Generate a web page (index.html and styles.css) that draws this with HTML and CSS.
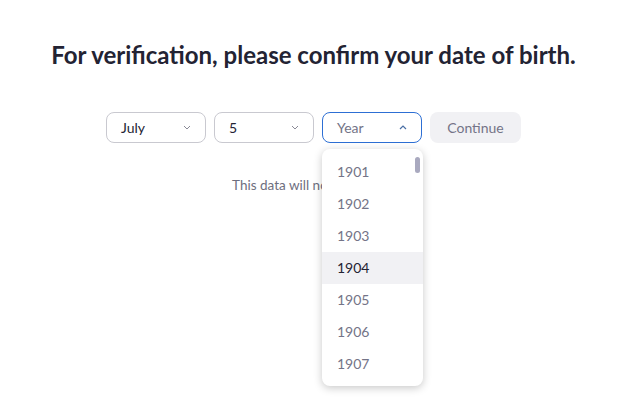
FILE: index.html
```html
<!DOCTYPE html>
<html>
<head>
<meta charset="utf-8">
<link rel="stylesheet" href="styles.css">
</head>
<body>
<div class="page">
  <h1 class="title">For verification, please confirm your date of birth.</h1>
  <div class="row">
    <div class="select">
      <span class="value">July</span>
      <svg class="chev" width="8" height="5" viewBox="0 0 8 5"><path d="M1 1 L4 4 L7 1" fill="none" stroke="#8a8a96" stroke-width="1"/></svg>
    </div>
    <div class="select">
      <span class="value">5</span>
      <svg class="chev" width="8" height="5" viewBox="0 0 8 5"><path d="M1 1 L4 4 L7 1" fill="none" stroke="#8a8a96" stroke-width="1"/></svg>
    </div>
    <div class="select open">
      <span class="value placeholder">Year</span>
      <svg class="chev" width="8" height="5" viewBox="0 0 8 5"><path d="M1 4 L4 1 L7 4" fill="none" stroke="#4a6fa5" stroke-width="1.2"/></svg>
      <div class="menu">
        <div class="item">1901</div>
        <div class="item">1902</div>
        <div class="item">1903</div>
        <div class="item hover">1904</div>
        <div class="item">1905</div>
        <div class="item">1906</div>
        <div class="item">1907</div>
        <div class="scroll"></div>
      </div>
    </div>
    <button class="btn">Continue</button>
  </div>
  <p class="note">This data will not be stored.</p>
</div>
</body>
</html>
```
FILE: styles.css
```css
* { box-sizing: border-box; }
html, body { margin: 0; padding: 0; background: #ffffff; }
body { font-family: Lato, "Noto Sans", sans-serif; width: 635px; height: 412px; overflow: hidden; }
.page { display: flex; flex-direction: column; align-items: center; padding-right: 8px; }
.title { margin: 40px 0 0 0; font-size: 24px; line-height: 30px; font-weight: 700; color: #232333; }
.row { display: flex; gap: 8px; margin-top: 42px; }
.select { position: relative; width: 100px; height: 31px; border: 1px solid #c9c9d0; border-radius: 8px; display: flex; align-items: center; justify-content: space-between; padding: 0 14px 0 14px; }
.select.open { border-color: #2d6fd4; }
.value { font-size: 14px; color: #232333; }
.value.placeholder { color: #747487; }
.chev { display: block; }
.btn { width: 91px; height: 31px; border: none; border-radius: 8px; background: #f1f1f4; color: #747487; font-family: Lato, "Noto Sans", sans-serif; font-size: 14px; padding: 0; }
.menu { position: absolute; left: -1px; top: 36px; width: 101px; height: 237px; background: #fff; border-radius: 8px; box-shadow: 0 2px 8px rgba(0,0,0,0.22); padding-top: 7px; overflow: hidden; z-index: 5; }
.item { height: 32px; line-height: 32px; padding-left: 15px; font-size: 14px; color: #747487; }
.item.hover { background: #f1f1f4; color: #232333; }
.scroll { position: absolute; right: 3px; top: 8px; width: 5px; height: 16px; border-radius: 3px; background: #a9a9bf; }
.note { margin: 33px 0 0 0; font-size: 13.5px; line-height: 18px; color: #6e6e7e; }
```
